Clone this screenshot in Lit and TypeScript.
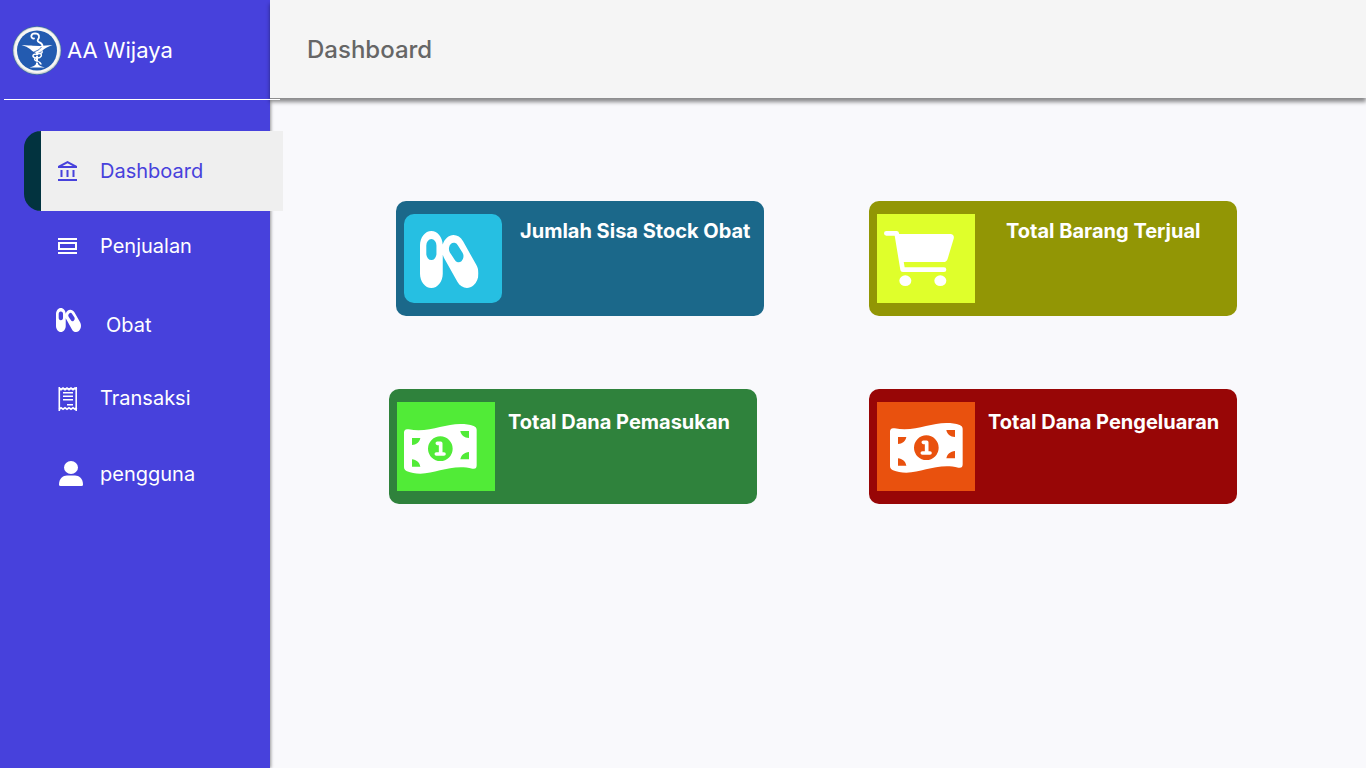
import { LitElement, html, css, svg } from "lit";
import { customElement } from "lit/decorators.js";

const capsules = svg`
  <path fill-rule="evenodd" d="M555.3 300.1L424.2 112.8C401.9 81 366.4 64 330.4 64c-22.6 0-45.5 6.7-65.5 20.7-19.7 13.8-33.7 32.8-41.5 53.8C220.5 79.2 172 32 112 32 50.1 32 0 82.1 0 144v224c0 61.9 50.1 112 112 112s112-50.1 112-112V218.9c3.3 8.6 7.3 17.1 12.8 25L368 431.2c22.2 31.8 57.7 48.8 93.8 48.8 22.7 0 45.5-6.7 65.5-20.7 51.7-36.2 64.2-107.5 28-159.2z
    M112 95a50 50 0 0 1 50 50v65a50 50 0 0 1-100 0v-65a50 50 0 0 1 50-50z
    M372 144L419 202A48 48 0 0 1 341 258L294 200A48 48 0 0 1 372 144z"/>`;

const bill = svg`
  <path fill-rule="evenodd" d="M21 92Q21 79 35 82C95 93 140 66 190 66C206 66 218 68 230 72Q239 75 239 84V190Q239 203 226 200C165 186 120 214 70 215C54 215 42 212 30 208Q21 204 21 195Z
    M45 108V129C58 129 68 120 70 108Z
    M216 87H190C192 99 202 108 216 108Z
    M45 194H70C68 182 58 173 45 172Z
    M216 172V150C202 151 192 160 190 172Z
    M130 103a37 37 0 1 0 0 74a37 37 0 1 0 0-74Z"/>
  <path d="M121 124H131V156M118 156H141" fill="none" stroke="#fff" stroke-width="11" stroke-linecap="round" stroke-linejoin="round"/>`;

const tiles = {
  capsules: svg`<svg class="art" viewBox="0 0 98 89" aria-hidden="true">
    <svg x="16" y="17" width="58.5" height="57" viewBox="0 32 576 448" preserveAspectRatio="none">${capsules}</svg></svg>`,
  cart: svg`<svg class="art" viewBox="0 0 294 267" aria-hidden="true">
    <path d="M28 58H59L77 167H201" fill="none" stroke="#fff" stroke-width="14" stroke-linecap="round" stroke-linejoin="round"/>
    <path d="M58 60H220Q233 61 230 74L212 134Q209 144 199 144H78Z"/>
    <ellipse cx="85" cy="200" rx="18" ry="16"/><ellipse cx="190" cy="200" rx="18" ry="16"/></svg>`,
  income: svg`<svg class="art" viewBox="0 0 294 267" aria-hidden="true">${bill}</svg>`,
  expense: svg`<svg class="art" viewBox="0 0 294 267" aria-hidden="true"><g transform="translate(18 -3)">${bill}</g></svg>`,
};

const navIcons = {
  bank: svg`<svg class="icon" viewBox="0 0 28 28" aria-hidden="true">
    <path fill-rule="evenodd" d="M11.5 4L21 9V11H2V9ZM11.5 6.3L6.4 9H16.6Z"/>
    <path d="M4.5 13h2v7h-2zM10.5 13h2v7h-2zM16.5 13h2v7h-2zM2 22h19v2H2z"/></svg>`,
  rows: svg`<svg class="icon" viewBox="0 0 28 28" aria-hidden="true">
    <path fill-rule="evenodd" d="M2 6h19v2H2zM2 10h19v8H2zM4 12v4h15v-4zM2 20h19v2H2z"/></svg>`,
  capsules: svg`<svg class="icon" viewBox="0 0 28 28" aria-hidden="true">
    <svg x="0" y="0" width="25" height="24" viewBox="0 32 576 448" preserveAspectRatio="none">${capsules}</svg></svg>`,
  receipt: svg`<svg class="icon" viewBox="0 0 28 28" aria-hidden="true">
    <path fill="none" stroke="currentColor" stroke-width="1.8" d="M3.2 4.2L5 5.6L7 4.2L9 5.6L11 4.2L13 5.6L15 4.2L17 5.6L19 4.2L20.8 5.4M3.2 25.2L5 23.8L7 25.2L9 23.8L11 25.2L13 23.8L15 25.2L17 23.8L19 25.2L20.8 23.8"/>
    <path d="M2.500 3h1.600v24h-1.600zM19.400 3H21v24h-1.600zM7 8h10v1.600H7zM7 11.500h10v1.600H7zM7 15h10v1.600H7zM11 20h6v1.600h-6z"/></svg>`,
  person: svg`<svg class="icon" viewBox="0 0 28 28" aria-hidden="true">
    <ellipse cx="15" cy="7.500" rx="7" ry="6.500"/>
    <path d="M3 24.500C3 18.500 7 15.500 11 15.500H19C23 15.500 27 18.500 27 24.500Q27 26 25.500 26H4.500Q3 26 3 24.500Z"/></svg>`,
};

const links = [
  { label: "Dashboard", icon: navIcons.bank, mod: "active" },
  { label: "Penjualan", icon: navIcons.rows, mod: "" },
  { label: "Obat", icon: navIcons.capsules, mod: "inset" },
  { label: "Transaksi", icon: navIcons.receipt, mod: "" },
  { label: "pengguna", icon: navIcons.person, mod: "" },
];

const cards = [
  { title: "Jumlah Sisa Stock Obat", art: tiles.capsules, mod: "stock" },
  { title: "Total Barang Terjual", art: tiles.cart, mod: "sold" },
  { title: "Total Dana Pemasukan", art: tiles.income, mod: "income" },
  { title: "Total Dana Pengeluaran", art: tiles.expense, mod: "expense" },
];

@customElement("app-root")
export class AppRoot extends LitElement {
  static styles = css`
    :host {
      display: flex;
      min-height: 100vh;
      background: #f9f9fc;
      font-family: Inter, sans-serif;
      color: #fff;
    }
    .sidebar {
      flex: 0 0 270px;
      background: #4741dc;
      box-shadow: 1px 0 3px rgba(0, 0, 0, 0.4);
    }
    .brand {
      position: relative;
      z-index: 1;
      display: flex;
      align-items: center;
      gap: 5px;
      box-sizing: border-box;
      height: 100px;
      margin: 0 -10px 0 4px;
      padding-left: 8px;
      border-bottom: 1px solid #fff;
      font-size: 22px;
      line-height: 28px;
      font-weight: 400;
    }
    .logo {
      width: 50px;
      height: 50px;
    }
    .menu {
      position: relative;
      z-index: 1;
      list-style: none;
      margin: 31px -13px 0 24px;
      padding: 0;
    }
    .item + .item {
      margin-top: 26px;
    }
    .item.active + .item {
      margin-top: 10px;
    }
    .link {
      display: flex;
      align-items: center;
      gap: 16px;
      height: 50px;
      padding-left: 32px;
      color: #fff;
      font-size: 20px;
      line-height: 24px;
      font-weight: 400;
      text-decoration: none;
    }
    .active .link {
      height: 80px;
      padding-left: 15px;
      border-left: 17px solid #02333f;
      border-radius: 17px 0 0 17px;
      background: #efefef;
      color: #4741dc;
    }
    .inset .label {
      padding: 6px 0 0 6px;
    }
    .icon {
      width: 28px;
      height: 28px;
      fill: currentColor;
    }
    .content {
      flex: 1;
      min-width: 0;
    }
    .topbar {
      display: flex;
      align-items: center;
      box-sizing: border-box;
      height: 98px;
      padding: 2px 37px 0;
      background: #f5f5f5;
      box-shadow: 0 4px 4px rgba(0, 0, 0, 0.45);
    }
    .heading {
      margin: 0;
      color: #666;
      font-size: 24px;
      line-height: 32px;
      font-weight: 500;
    }
    .cards {
      display: grid;
      grid-template-columns: minmax(0, 375fr) minmax(0, 368fr);
      gap: 73px 105px;
      padding: 103px 129px 40px 119px;
    }
    .card {
      display: flex;
      box-sizing: border-box;
      width: 100%;
      max-width: 368px;
      min-height: 115px;
      padding: 13px 8px;
      border-radius: 10px;
    }
    .tile {
      flex: none;
      width: 98px;
      height: 89px;
    }
    .art {
      display: block;
      width: 100%;
      height: 100%;
      fill: #fff;
    }
    .title {
      margin: 0;
      padding: 5px 0 0 13px;
      font-size: 20px;
      line-height: 24px;
      font-weight: 700;
    }
    .stock {
      justify-self: end;
      background: #1b688a;
    }
    .stock .tile {
      border-radius: 10px;
      background: #26bfe2;
    }
    .stock .title {
      padding-left: 18px;
      white-space: nowrap;
    }
    .sold {
      background: #929605;
    }
    .sold .tile {
      background: #dfff2b;
    }
    .sold .title {
      padding-left: 31px;
    }
    .income {
      background: #2f823c;
    }
    .income .tile {
      background: #51eb37;
    }
    .expense {
      background: #980606;
    }
    .expense .tile {
      background: #e9510e;
    }
    .income .title,
    .expense .title {
      padding-top: 8px;
    }
  `;

  render() {
    return html`
      <aside class="sidebar">
        <div class="brand">
          <svg class="logo" viewBox="0 0 50 50" aria-hidden="true">
            <circle cx="25" cy="25.500" r="24.500" fill="#3a68a8" />
            <circle cx="25" cy="25.500" r="23.800" fill="#d0d3d3" />
            <circle cx="25" cy="25.200" r="22.800" fill="#f7f7f5" />
            <circle cx="25" cy="25.500" r="20" fill="#235bb0" />
            <path fill="#fff" d="M9.500 20C15 20.500 19 20.500 21 20.800L28 21C32 20.600 36 20.500 40.500 20C36 22 33 23 31 25Q28 27.500 26 28V39Q27 41 33 42.500H17.500Q23 41 24 39V28Q20 26.500 18 24Q15 21.500 9.500 20Z" />
            <path fill="none" stroke="#fff" stroke-width="1.800" stroke-linecap="round" d="M22 13.500C18.500 14 18 8.500 23 8.300C28 8.500 27.500 12.500 26 14.500C24 17.500 31 17 30.500 21.500" />
            <path fill="none" stroke="#fff" stroke-width="1.400" stroke-linecap="round" d="M30 26C31 29 28 28 25 29C20 29 19.500 32 24 33C30 33.500 30.500 29 28 28.500M23 33C20.500 36 28 36 29 39" />
            <path fill="none" stroke="#235bb0" stroke-width="0.800" d="M22 27Q28 25 29.500 22M22.500 31Q25.500 30 27.500 31M23.500 37L27 37.500" />
          </svg>
          <span>AA Wijaya</span>
        </div>
        <nav>
          <ul class="menu">
            ${links.map(
              (l) => html`<li class="item ${l.mod}">
                <a class="link" href="#">${l.icon}<span class="label">${l.label}</span></a>
              </li>`
            )}
          </ul>
        </nav>
      </aside>
      <main class="content">
        <header class="topbar"><h1 class="heading">Dashboard</h1></header>
        <section class="cards">
          ${cards.map(
            (c) => html`<article class="card ${c.mod}">
              <div class="tile">${c.art}</div>
              <h2 class="title">${c.title}</h2>
            </article>`
          )}
        </section>
      </main>
    `;
  }
}
